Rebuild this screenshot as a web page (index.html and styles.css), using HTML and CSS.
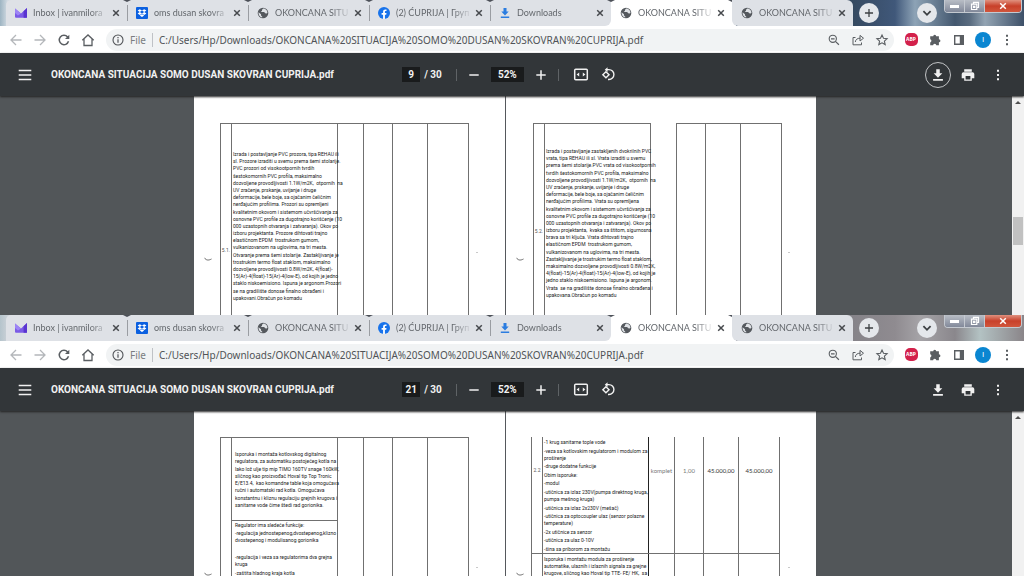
FILE: index.html
```html
<!DOCTYPE html>
<html lang="sr">
<head>
<meta charset="utf-8">
<title>OKONCANA SITUACIJA SOMO DUSAN SKOVRAN CUPRIJA.pdf</title>
<link rel="stylesheet" href="styles.css">
</head>
<body>
<svg class="defs" aria-hidden="true">
  <symbol id="mail" viewBox="0 0 12 12"><path d="M0 1.500 6 6.600 12 1v8.700a1 1 0 0 1-1 1H1a1 1 0 0 1-1-1z" fill="#7b5be6"/><path d="M0 1.500 6 6.600 3 8.600 0 6z" fill="#9d84f5"/><path d="M12 1v9.700H8.600V4.200z" fill="#5a35d0"/></symbol>
  <symbol id="dropbox" viewBox="0 0 12 12"><rect width="12" height="12" rx="1" fill="#0b60e0"/><path d="m3.800 2.200 2.200 1.400-2.200 1.500-2.200-1.500zm4.400 0 2.200 1.400-2.200 1.500L6 3.600zM3.800 5.100 6 6.500 3.800 8 1.600 6.500zm4.400 0 2.200 1.400L8.200 8 6 6.500zM6 7.200l2.200 1.400L6 10 3.800 8.600z" fill="#fff"/></symbol>
  <symbol id="globe" viewBox="0 0 12 12"><circle cx="6" cy="6" r="5.300" fill="#55595e"/><path d="M1.500 5.200 4 7.200v1.200l1.200 1v1.100C2.900 10.200 1.300 8 1.500 5.200zM6.300 1.600 5 2.700v1.100L3.800 5h3.400l.9 1.200 1.700.4.700-1.200C10.200 3.300 8.500 1.700 6.300 1.600z" fill="#dfe2e6"/></symbol>
  <symbol id="facebook" viewBox="0 0 12 12"><circle cx="6" cy="6" r="6" fill="#1873eb"/><path d="M5.100 12V7.700H3.600V6h1.500V4.700c0-1.500.9-2.300 2.200-2.300l1.200.1v1.500h-.7c-.7 0-.9.4-.9.900V6h1.600l-.3 1.700H6.900V12z" fill="#fff"/></symbol>
  <symbol id="dl" viewBox="0 0 12 12"><path d="M4.500 1h3v3.600h2.200L6 8.400 2.300 4.600h2.200zM1.800 9.500h8.400V11H1.800z"/></symbol>
  <symbol id="close" viewBox="0 0 10 10"><path d="m2.200 2.200 5.600 5.600m0-5.600L2.200 7.800" fill="none" stroke="currentColor" stroke-width="1.500"/></symbol>
  <symbol id="back" viewBox="0 0 14 14"><path d="M12.500 7H2.200M7 2 2 7l5 5" fill="none" stroke="currentColor" stroke-width="1.300"/></symbol>
  <symbol id="fwd" viewBox="0 0 14 14"><path d="M1.500 7h10.300M7 2l5 5-5 5" fill="none" stroke="currentColor" stroke-width="1.300"/></symbol>
  <symbol id="reload" viewBox="0 0 14 14"><path d="M11.500 8.300A4.700 4.700 0 1 1 10.600 4l1 1" fill="none" stroke="currentColor" stroke-width="1.500"/><path d="M12.300 1.700v4.200H8z" fill="currentColor"/></symbol>
  <symbol id="home" viewBox="0 0 14 14"><path d="M1.300 7.300 7 2l5.700 5.300M3 6v6.500h8V6" fill="none" stroke="currentColor" stroke-width="1.300"/></symbol>
  <symbol id="info" viewBox="0 0 14 14"><circle cx="7" cy="7" r="5" fill="none" stroke="currentColor" stroke-width="1.100"/><path d="M7 6.300v3.400M7 4v1.200" stroke="currentColor" stroke-width="1.200"/></symbol>
  <symbol id="zoomout" viewBox="0 0 14 14"><circle cx="5.800" cy="5.800" r="3.600" fill="none" stroke="currentColor" stroke-width="1.100"/><path d="m8.400 8.400 3.500 3.400M4 5.800h3.600" stroke="currentColor" stroke-width="1.200"/></symbol>
  <symbol id="share" viewBox="0 0 14 14"><path d="M4.500 4.500H2v7.300h8.500V9.500M4.300 9c.3-2.500 1.900-3.800 5-3.800" fill="none" stroke="currentColor"/><path d="M9 2.400 12.500 5.200 9 8z" fill="none" stroke="currentColor"/></symbol>
  <symbol id="star" viewBox="0 0 14 14"><path d="m7 2 1.500 3.300 3.600.4-2.700 2.400.8 3.500L7 9.800l-3.200 1.800.8-3.500-2.700-2.400 3.600-.4z" fill="none" stroke="currentColor" stroke-width="1.100"/></symbol>
  <symbol id="puzzle" viewBox="0 0 14 14"><path d="M5.200 3.200a1.500 1.500 0 0 1 3 0h2.700v3a1.500 1.500 0 0 1 0 3v3.100H8.300a1.600 1.600 0 0 0-3.200 0H2.200V9.400a1.600 1.600 0 0 0 0-3.100V3.200z" fill="currentColor"/></symbol>
  <symbol id="panel" viewBox="0 0 14 14"><path d="M2 2h10v10H2zm1.400 1.400v7.200h4.400V3.400z" fill="currentColor" fill-rule="evenodd"/></symbol>
  <symbol id="dots" viewBox="0 0 14 14"><path d="M6 1.800h2v2H6zm0 4.200h2v2H6zm0 4.200h2v2H6z" fill="currentColor"/></symbol>
  <symbol id="menu" viewBox="0 0 14 14"><path d="M.7 2.500h12.600M.7 7h12.600M.7 11.500h12.600" stroke="currentColor" stroke-width="1.600"/></symbol>
  <symbol id="minus" viewBox="0 0 14 14"><path d="M2.300 7h9.400" stroke="currentColor" stroke-width="1.500"/></symbol>
  <symbol id="plus" viewBox="0 0 14 14"><path d="M2.300 7h9.400M7 2.300v9.400" stroke="currentColor" stroke-width="1.500"/></symbol>
  <symbol id="fit" viewBox="0 0 16 14"><rect x="1.700" y="1.700" width="12.600" height="10.600" rx="1" fill="none" stroke="currentColor" stroke-width="1.500"/><path d="m6.200 4.900v4.200L3.600 7zm3.600 0v4.200L12.400 7z" fill="currentColor"/></symbol>
  <symbol id="rotate" viewBox="0 0 16 16"><path d="m5.800 5 3.300 3.200-3.300 3.300-3.300-3.300zM6.500 2.800H9a5.200 5.200 0 0 1 0 10.600H8" fill="none" stroke="currentColor" stroke-width="1.500"/><path d="M7.500.2v5.200L4.500 2.800z" fill="currentColor"/></symbol>
  <symbol id="print" viewBox="0 0 14 14"><path d="M3.200 1.300h7.600v2.400H3.200zM2.500 4.300h9A1.800 1.800 0 0 1 13.300 6v4.200h-2.500v2.500H3.200v-2.500H.7V6a1.800 1.800 0 0 1 1.800-1.700zM4.600 8v3.400h4.800V8z" fill="currentColor" fill-rule="evenodd"/></symbol>
  <symbol id="chev" viewBox="0 0 10 10"><path d="m2 3.500 3 3 3-3" fill="none" stroke="currentColor" stroke-width="1.500"/></symbol>
  <symbol id="restore" viewBox="0 0 10 10"><path d="M3.500 3V1.300h5v5.200H7M1.500 3.200h5.300v5.300H1.500zM3.600 5.300h1.200v1.200H3.600z" fill="none" stroke="currentColor" stroke-width="1.200"/></symbol>
  <symbol id="tick" viewBox="0 0 8 4"><path d="M.5 .8C2 3.400 4.500 3.600 7.500 2" fill="none" stroke="#666"/></symbol>
</svg>

<section class="window">
  <header class="strip strip-blue">
    <nav class="tabs">
      <a class="tab" href="#"><svg class="fav"><use href="#mail"/></svg><span class="tab-title">Inbox | ivanmilora</span><svg class="x"><use href="#close"/></svg></a>
      <a class="tab" href="#"><svg class="fav"><use href="#dropbox"/></svg><span class="tab-title">oms dusan skovra</span><svg class="x"><use href="#close"/></svg></a>
      <a class="tab" href="#"><svg class="fav"><use href="#globe"/></svg><span class="tab-title">OKONCANA SITU</span><svg class="x"><use href="#close"/></svg></a>
      <a class="tab" href="#"><svg class="fav"><use href="#facebook"/></svg><span class="tab-title">(2) ĆUPRIJA | Груп</span><svg class="x"><use href="#close"/></svg></a>
      <a class="tab tab-last" href="#"><svg class="fav fav-dl"><use href="#dl"/></svg><span class="tab-title">Downloads</span><svg class="x"><use href="#close"/></svg></a>
      <a class="tab active" href="#"><svg class="fav"><use href="#globe"/></svg><span class="tab-title">OKONCANA SITU</span><svg class="x"><use href="#close"/></svg></a>
      <a class="tab tab-end" href="#"><svg class="fav"><use href="#globe"/></svg><span class="tab-title">OKONCANA SITU</span><svg class="x"><use href="#close"/></svg></a>
    </nav>
    <button class="round" aria-label="New tab"><svg><use href="#plus"/></svg></button>
    <button class="round round-right" aria-label="Search tabs"><svg><use href="#chev"/></svg></button>
    <div class="controls"><button aria-label="Minimize"><i class="min"></i></button><button aria-label="Restore"><svg><use href="#restore"/></svg></button><button class="quit" aria-label="Close"><svg><use href="#close"/></svg></button></div>
  </header>
  <div class="address">
    <button class="ic dim" aria-label="Back"><svg><use href="#back"/></svg></button>
    <button class="ic dim" aria-label="Forward"><svg><use href="#fwd"/></svg></button>
    <button class="ic" aria-label="Reload"><svg><use href="#reload"/></svg></button>
    <button class="ic" aria-label="Home"><svg><use href="#home"/></svg></button>
    <div class="omnibox">
      <svg class="info"><use href="#info"/></svg><label class="file" for="url1">File</label>
      <input class="url" id="url1" value="C:/Users/Hp/Downloads/OKONCANA%20SITUACIJA%20SOMO%20DUSAN%20SKOVRAN%20CUPRIJA.pdf">
      <button class="ic" aria-label="Zoom"><svg><use href="#zoomout"/></svg></button>
      <button class="ic" aria-label="Share"><svg><use href="#share"/></svg></button>
      <button class="ic" aria-label="Bookmark"><svg><use href="#star"/></svg></button>
    </div>
    <button class="ic" aria-label="Adblock Plus"><span class="abp">ABP</span></button>
    <button class="ic" aria-label="Extensions"><svg><use href="#puzzle"/></svg></button>
    <button class="ic" aria-label="Side panel"><svg><use href="#panel"/></svg></button>
    <button class="ic" aria-label="Profile"><span class="avatar">I</span></button>
    <button class="ic" aria-label="Menu"><svg><use href="#dots"/></svg></button>
  </div>
  <div class="pdfbar">
    <div class="pdf-left"><button class="ic" aria-label="Sidebar"><svg><use href="#menu"/></svg></button><h1 class="pdf-title">OKONCANA SITUACIJA SOMO DUSAN SKOVRAN CUPRIJA.pdf</h1></div>
    <div class="pdf-mid">
      <input class="box box-page" aria-label="Page" value="9"><span class="total">/ 30</span><i class="sep"></i>
      <button class="ic" aria-label="Zoom out"><svg><use href="#minus"/></svg></button>
      <input class="box box-zoom" aria-label="Zoom level" value="52%">
      <button class="ic" aria-label="Zoom in"><svg><use href="#plus"/></svg></button><i class="sep"></i>
      <button class="ic wide" aria-label="Fit to page"><svg><use href="#fit"/></svg></button>
      <button class="ic wide" aria-label="Rotate"><svg><use href="#rotate"/></svg></button>
    </div>
    <div class="pdf-right">
      <button class="ic focus" aria-label="Download"><svg fill="currentColor"><use href="#dl"/></svg></button>
      <button class="ic" aria-label="Print"><svg><use href="#print"/></svg></button>
      <button class="ic" aria-label="More"><svg><use href="#dots"/></svg></button>
    </div>
  </div>
  <main class="viewer">
    <div class="pages">
      <article class="page">
        <svg class="mark"><use href="#tick"/></svg><i class="speck"></i>
        <table class="sheet">
          <colgroup><col class="c1"><col class="c2"><col class="c3"><col class="c4"><col class="c5"><col class="c6"></colgroup>
          <tr class="tall"><td class="num num-a">5.1.</td><td class="txt txt-a"><div class="lines">
            <span>Izrada i postavljanje PVC prozora, tipa REHAU ili</span><span>sl. Prozore izraditi u svemu prema šemi stolarije.</span><span>PVC prozori od visokootpornih tvrdih</span><span>šestokomornih PVC profila, maksimalno</span><span>dozvoljene provodljivosti 1.1W/m2K,&nbsp; otpornih&nbsp; na</span><span>UV zračenje, prskanje, uvijanje i druge</span><span>deformacije, bele boje, sa ojačanim čeličnim</span><span>nerđajućim profilima. Prozori su opremljeni</span><span>kvalitetnim okovom i sistemom učvršćivanja za</span><span>osnovne PVC profile za dugotrajno korišćenje (10</span><span>000 uzastopnih otvaranja i zatvaranja). Okov po</span><span>izboru projektanta. Prozore dihtovati trajno</span><span>elastičnom EPDM&nbsp; trostrukom gumom,</span><span>vulkanizovanom na uglovima, na tri mesta.</span><span>Otvaranje prema šemi stolarije. Zastakljivanje je</span><span>trostrukim termo float staklom, maksimalno</span><span>dozvoljene provodljivosti 0.8W/m2K, 4(float)-</span><span>15(Ar)-4(float)-15(Ar)-4(low-E), od kojih je jedno</span><span>staklo niskoemisiono. Ispuna je argonom.Prozori</span><span>se na gradilište donose finalno obrađeni i</span><span>upakovani.Obračun po komadu</span>
          </div></td><td></td><td></td><td></td><td></td></tr>
        </table>
      </article>
      <article class="page">
        <svg class="mark"><use href="#tick"/></svg><i class="speck"></i>
        <table class="sheet">
          <colgroup><col class="c1"><col class="c2"><col class="c3"><col class="c4"><col class="c5"><col class="c6"></colgroup>
          <tr class="tall"><td class="num num-b">5.2.</td><td class="txt txt-b"><div class="lines">
            <span>Izrada i postavljanje zastakljenih dvokrilnih PVC</span><span>vrata, tipa REHAU ili sl. Vrata izraditi u svemu</span><span>prema šemi stolarije.PVC vrata od visokootpornih</span><span>tvrdih šestokomornih PVC profila, maksimalno</span><span>dozvoljene provodljivosti 1.1W/m2K,&nbsp; otpornih&nbsp; na</span><span>UV zračenje, prskanje, uvijanje i druge</span><span>deformacije, bele boje, sa ojačanim čeličnim</span><span>nerđajućim profilima. Vrata su opremljena</span><span>kvalitetnim okovom i sistemom učvršćivanja za</span><span>osnovne PVC profile za dugotrajno korišćenje (10</span><span>000 uzastopnih otvaranja i zatvaranja). Okov po</span><span>izboru projektanta,&nbsp; kvaka sa štitom, sigurnosna</span><span>brava sa tri ključa. Vrata dihtovati trajno</span><span>elastičnom EPDM&nbsp; trostrukom gumom,</span><span>vulkanizovanom na uglovima, na tri mesta.</span><span>Zastakljivanje je trostrukim termo float staklom,</span><span>maksimalno dozvoljene provodljivosti 0.8W/m2K,</span><span>4(float)-15(Ar)-4(float)-15(Ar)-4(low-E), od kojih je</span><span>jedno staklo niskoemisiono. Ispuna je argonom.</span><span>Vrata&nbsp; se na gradilište donose finalno obrađena i</span><span>upakovana.Obračun po komadu</span>
          </div></td><td class="gap"></td><td></td><td></td><td></td></tr>
        </table>
      </article>
    </div>
    <div class="scroll"><i class="up"></i><i class="thumb"></i></div>
  </main>
</section>

<section class="window">
  <header class="strip strip-grey">
    <nav class="tabs">
      <a class="tab" href="#"><svg class="fav"><use href="#mail"/></svg><span class="tab-title">Inbox | ivanmilora</span><svg class="x"><use href="#close"/></svg></a>
      <a class="tab" href="#"><svg class="fav"><use href="#dropbox"/></svg><span class="tab-title">oms dusan skovra</span><svg class="x"><use href="#close"/></svg></a>
      <a class="tab" href="#"><svg class="fav"><use href="#globe"/></svg><span class="tab-title">OKONCANA SITU</span><svg class="x"><use href="#close"/></svg></a>
      <a class="tab" href="#"><svg class="fav"><use href="#facebook"/></svg><span class="tab-title">(2) ĆUPRIJA | Груп</span><svg class="x"><use href="#close"/></svg></a>
      <a class="tab tab-last" href="#"><svg class="fav fav-dl"><use href="#dl"/></svg><span class="tab-title">Downloads</span><svg class="x"><use href="#close"/></svg></a>
      <a class="tab active" href="#"><svg class="fav"><use href="#globe"/></svg><span class="tab-title">OKONCANA SITU</span><svg class="x"><use href="#close"/></svg></a>
      <a class="tab tab-end" href="#"><svg class="fav"><use href="#globe"/></svg><span class="tab-title">OKONCANA SITU</span><svg class="x"><use href="#close"/></svg></a>
    </nav>
    <button class="round" aria-label="New tab"><svg><use href="#plus"/></svg></button>
    <button class="round round-right" aria-label="Search tabs"><svg><use href="#chev"/></svg></button>
    <div class="controls"><button aria-label="Minimize"><i class="min"></i></button><button aria-label="Restore"><svg><use href="#restore"/></svg></button><button class="quit" aria-label="Close"><svg><use href="#close"/></svg></button></div>
  </header>
  <div class="address">
    <button class="ic dim" aria-label="Back"><svg><use href="#back"/></svg></button>
    <button class="ic dim" aria-label="Forward"><svg><use href="#fwd"/></svg></button>
    <button class="ic" aria-label="Reload"><svg><use href="#reload"/></svg></button>
    <button class="ic" aria-label="Home"><svg><use href="#home"/></svg></button>
    <div class="omnibox">
      <svg class="info"><use href="#info"/></svg><label class="file" for="url2">File</label>
      <input class="url" id="url2" value="C:/Users/Hp/Downloads/OKONCANA%20SITUACIJA%20SOMO%20DUSAN%20SKOVRAN%20CUPRIJA.pdf">
      <button class="ic" aria-label="Zoom"><svg><use href="#zoomout"/></svg></button>
      <button class="ic" aria-label="Share"><svg><use href="#share"/></svg></button>
      <button class="ic" aria-label="Bookmark"><svg><use href="#star"/></svg></button>
    </div>
    <button class="ic" aria-label="Adblock Plus"><span class="abp">ABP</span></button>
    <button class="ic" aria-label="Extensions"><svg><use href="#puzzle"/></svg></button>
    <button class="ic" aria-label="Side panel"><svg><use href="#panel"/></svg></button>
    <button class="ic" aria-label="Profile"><span class="avatar">I</span></button>
    <button class="ic" aria-label="Menu"><svg><use href="#dots"/></svg></button>
  </div>
  <div class="pdfbar">
    <div class="pdf-left"><button class="ic" aria-label="Sidebar"><svg><use href="#menu"/></svg></button><h1 class="pdf-title">OKONCANA SITUACIJA SOMO DUSAN SKOVRAN CUPRIJA.pdf</h1></div>
    <div class="pdf-mid">
      <input class="box box-page" aria-label="Page" value="21"><span class="total">/ 30</span><i class="sep"></i>
      <button class="ic" aria-label="Zoom out"><svg><use href="#minus"/></svg></button>
      <input class="box box-zoom" aria-label="Zoom level" value="52%">
      <button class="ic" aria-label="Zoom in"><svg><use href="#plus"/></svg></button><i class="sep"></i>
      <button class="ic wide" aria-label="Fit to page"><svg><use href="#fit"/></svg></button>
      <button class="ic wide" aria-label="Rotate"><svg><use href="#rotate"/></svg></button>
    </div>
    <div class="pdf-right">
      <button class="ic" aria-label="Download"><svg fill="currentColor"><use href="#dl"/></svg></button>
      <button class="ic" aria-label="Print"><svg><use href="#print"/></svg></button>
      <button class="ic" aria-label="More"><svg><use href="#dots"/></svg></button>
    </div>
  </div>
  <main class="viewer">
    <div class="pages">
      <article class="page page-c">
        <svg class="mark"><use href="#tick"/></svg><i class="speck"></i>
        <table class="sheet">
          <colgroup><col class="c1"><col class="c2"><col class="c3"><col class="c4"><col class="c5"><col class="c6"></colgroup>
          <tr class="first-c"><td rowspan="2"></td><td class="txt txt-c"><div class="lines short">
            <span>Isporuka i montaža kotlovskog digitalnog</span><span>regulatora, za automatiku postojećeg kotla na</span><span>lako lož ulje tip mip TIMO 160TV snage 160kW,</span><span>sličnog kao proizvođač Hoval tip Top Tronic</span><span>E/E13.4,&nbsp; kao komandne table koja omogućava</span><span>ručni i automatski rad kotla. Omogućava</span><span>konstantnu i kliznu regulaciju grejnih krugova i</span><span>sanitarne vode čime štedi rad gorionika.</span>
          </div></td><td rowspan="2"></td><td rowspan="2"></td><td rowspan="2"></td><td rowspan="2"></td></tr>
          <tr class="tall"><td class="txt txt-d">
            <p><span>Regulator ima sledeće funkcije:</span></p><p><span>-regulacija jednostepenog,dvostepenog,klizno</span><span>dvostepenog i modulisanog gorionika</span></p><p class="apart"><span>-regulacija i veza sa regulatorima dva grejna</span><span>kruga</span></p><p><span>-zaštita hladnog kraja kotla</span></p>
          </td></tr>
        </table>
      </article>
      <article class="page page-d">
        <svg class="mark"><use href="#tick"/></svg><i class="speck"></i>
        <table class="sheet">
          <colgroup><col class="c1"><col class="c2"><col class="c3"><col class="c4"><col class="c5"><col class="c6"></colgroup>
          <tr class="first-d"><td class="num num-d">2.2</td><td class="txt txt-e"><div class="lines list">
            <p><span>-1 krug sanitarne tople vode</span></p><p><span>-veza sa kotlovskim regulatorom i modulom za</span><span>proširenje</span></p><p><span>-druge dodatne funkcije</span></p><p><span>Obim isporuke:</span></p><p><span>-modul</span></p><p><span>-utičnica za izlaz 230V(pumpa direktnog kruga,</span><span>pumpa mešnog kruga)</span></p><p><span>-utičnica za izlaz 2x230V (mešač)</span></p><p><span>-utičnica za optocoupler ulaz (senzor polazne</span><span>temperature)</span></p><p><span>-2x utičnice za senzor</span></p><p><span>-utičnica za ulaz 0-10V</span></p><p><span>-šina sa priborom za montažu</span></p>
          </div></td><td class="val">komplet</td><td class="val">1,00</td><td class="val dark">45.000,00</td><td class="val dark">45.000,00</td></tr>
          <tr class="tall"><td></td><td class="txt txt-f"><p><span>Isporuka i montažu modula za proširenje</span><span>automatike, ulaznih i izlaznih signala za grejne</span><span>krugove, sličnog kao Hoval tip TTE- FE/ HK,&nbsp; sa</span></p></td><td></td><td></td><td></td><td></td></tr>
        </table>
      </article>
    </div>
    <div class="scroll"><i class="up"></i></div>
  </main>
</section>
</body>
</html>
```
FILE: styles.css
```css
* { box-sizing: border-box; }
body {
  margin: 0;
  height: 100vh;
  display: grid;
  grid-template-rows: 315fr 261fr;
  overflow: hidden;
  font-family: "Noto Sans", "Open Sans", sans-serif;
  color: #505357;
}
button, input { font: inherit; color: inherit; border: 0; padding: 0; margin: 0; background: none; }
.defs { display: none; }
.window { display: flex; flex-direction: column; min-height: 0; overflow: hidden; }

.strip { flex: none; height: 26px; display: flex; align-items: center; padding-left: 6px; position: relative; }
.strip-blue { background: linear-gradient(90deg, #9db4c2 0, #d5dde4 8px, #2e3f55 40px, #35495f 850px, #40587a 895px, #8da3b6 915px, #44586f 955px, #5a6c80 970px, #93a4b3 985px, #3d5068 100%); }
.strip-grey { background: linear-gradient(90deg, #b5c4cc 0, #ccd2d8 8px, #77777b 40px, #858389 850px, #8f8b90 895px, #a5a3a7 920px, #8a878c 955px, #b3c2c3 980px, #8a8589 100%); }
.tabs { display: flex; align-self: stretch; }
.tab { width: 121px; display: flex; align-items: center; padding: 0 6px 0 9px; background: #dee1e6; color: #63676c; text-decoration: none; position: relative; }
.tab:first-child { border-radius: 5px 0 0 0; }
.tab::after { content: ""; position: absolute; right: -1px; top: 5px; width: 1px; height: 16px; background: #9a9da2; z-index: 1; }
.tab::before { content: ""; position: absolute; right: -4px; top: 0; border: 4px solid transparent; border-top: 2px solid #4c5058; border-bottom: 0; z-index: 1; }
.tab-last::after, .active::after, .tab-end::after, .tab-end::before { display: none; }
.tab-last { border-radius: 0 0 6px 0; box-shadow: 6px 0 0 #fff; }
.active { background: #fff; border-radius: 6px 6px 0 0; box-shadow: 4px 0 0 #fff; z-index: 0; }
.tab-end { border-radius: 0 6px 0 6px; z-index: 1; }
.fav { flex: none; width: 12px; height: 12px; }
.fav-dl { fill: #2b7de0; }
.tab-title { flex: 1; margin: 0 2px 0 6px; font-family: Lato, "Open Sans", sans-serif; font-size: 9px; line-height: 14px; white-space: nowrap; -webkit-mask-image: linear-gradient(90deg, #000 75%, transparent); mask-image: linear-gradient(90deg, #000 75%, transparent); }
.x { flex: none; width: 10px; height: 10px; color: #46494d; }
.round { width: 20px; height: 20px; border-radius: 50%; background: #e4e7eb; display: grid; place-items: center; margin-left: 6px; color: #3c4043; flex: none; }
.round svg { width: 12px; height: 12px; }
.round-right { margin-left: auto; margin-right: 87px; }
.controls { position: absolute; right: 2px; top: 0; display: flex; height: 13px; border: 1px solid #c4c9d0; border-top: 0; border-radius: 0 0 4px 4px; overflow: hidden; }
.controls button { width: 20px; display: grid; place-items: center; border-right: 1px solid #c4c9d0; background: linear-gradient(#b9bec6, #82899a); color: #fff; }
.controls .quit { width: 36px; border: 0; background: linear-gradient(#e0917f, #c8402a 50%, #d1563c); }
.controls svg { width: 10px; height: 10px; }
.min { width: 9px; height: 3px; background: #fff; }

.address { flex: none; height: 27px; display: flex; align-items: center; padding: 0 5px 0 4px; background: #fff; }
.ic { width: 24px; height: 24px; flex: none; display: grid; place-items: center; color: #5a5e62; }
.ic svg { width: 14px; height: 14px; }
.dim { color: #b4b7ba; }
.omnibox { flex: 1; display: flex; align-items: center; height: 22px; margin: 0 5px 0 6px; padding-left: 5px; border-radius: 11px; background: #f1f3f4; font-size: 10px; line-height: 14px; }
.info { width: 14px; height: 14px; flex: none; }
.file { margin: 0 6px 0 5px; padding-right: 6px; border-right: 1px solid #bfc2c6; color: #7a7d81; }
.url { flex: 1; min-width: 0; height: 18px; }
.abp { width: 13px; height: 13px; border-radius: 5px; background: #d3214b; color: #fff; font: bold 5px/13px "Open Sans", sans-serif; text-align: center; }
.avatar { width: 16px; height: 16px; border-radius: 50%; background: #0a86d1; color: #fff; font: 8px/16px Roboto, sans-serif; text-align: center; }

.pdfbar { flex: none; height: 43px; display: grid; grid-template-columns: 1fr auto 1fr; align-items: center; padding: 0 12px; background: #323639; color: #f1f1f1; font-family: Roboto, sans-serif; font-size: 10px; font-weight: 700; box-shadow: 0 1px 2px #222; z-index: 1; }
.pdfbar .ic { color: #f1f1f1; }
.pdf-left, .pdf-mid, .pdf-right { display: flex; align-items: center; min-width: 0; }
.pdf-left { padding-left: 1px; }
.pdf-title { margin: 0 0 0 14px; font-size: inherit; line-height: 16px; white-space: nowrap; }
.box { height: 15px; background: #191b1c; text-align: center; }
.box-page { width: 18px; }
.box-zoom { width: 33px; margin: 0 5px; }
.total { margin: 0 14px 0 4px; }
.sep { width: 1px; height: 12px; background: #5f6366; }
.sep + .ic { margin-left: 5px; }
.pdf-mid .ic + .sep { margin-left: 5px; }
.pdf-mid .wide { width: 27px; }
.pdf-mid .sep + .wide { margin-left: 9px; }
.wide svg { width: 16px; height: 15px; }
.pdf-right { justify-content: flex-end; gap: 6px; padding-right: 2px; }
.focus { border: 1px solid #c2c4c6; border-radius: 50%; width: 26px; height: 26px; margin-right: -1px; }

.viewer { flex: 1; min-height: 0; display: flex; background: #525659; overflow: hidden; }
.pages { flex: 1; display: flex; justify-content: center; padding-right: 2px; }
.page { position: relative; width: 311px; padding: 27px 0 0 26px; background: #fff; }
.page + .page { border-left: 1px solid #55585c; padding-left: 27px; }
.page-c, .page-d { padding-top: 26px; }
.page-d.page-d { padding-left: 25px; }
.mark { position: absolute; left: 10px; top: 161px; width: 8px; height: 4px; }
.speck { position: absolute; left: 282px; top: 156px; width: 2px; height: 1px; background: #c9c9c9; }
.sheet { width: 248px; table-layout: fixed; border-collapse: collapse; font-family: Roboto, "Liberation Sans", sans-serif; font-size: 5px; line-height: 7px; color: #222; }
.c1 { width: 11px; } .c2 { width: 106px; } .c3 { width: 26px; } .c4 { width: 29px; } .c5 { width: 35px; } .c6 { width: 41px; }
.sheet td { padding: 0; border: 1px solid #707070; vertical-align: top; }
.sheet .gap { border-top: 0; border-bottom: 0; }
.tall { height: 240px; }
.sheet .num { text-align: center; color: #555; }
.sheet .num-a { padding-top: 123px; }
.sheet .num-b { padding-top: 104px; }
.sheet .num-d { padding-top: 30px; }
.sheet .txt { white-space: nowrap; }
.txt span { display: block; }
.sheet .txt-a { padding: 27px 0 0 1px; }
.sheet .txt-b { padding: 24px 0 0 1px; }
.sheet .txt-c { padding: 13px 0 0 3px; }
.sheet .txt-d { padding: 1px 0 0 3px; }
.sheet .txt-e { padding: 2px 0 0 1px; border-right-color: #222; }
.sheet .txt-f { padding: 2px 0 0 1px; border-right-color: #222; }
.lines { display: flex; flex-direction: column; justify-content: space-between; height: 151px; }
.short { height: 58px; }
.list { height: 114px; }
.txt p { margin: 0; }
.txt-d p { margin-bottom: 1px; }
.txt-d .apart { margin-top: 10px; margin-bottom: 2px; }
.first-c { height: 83px; }
.first-d { height: 116px; }
.page-d .first-d td { border-top: 0; }
.sheet .val { padding-top: 30px; text-align: center; font-family: Lato, sans-serif; font-size: 6px; color: #777; }
.sheet .dark { color: #333; }

.scroll { width: 12px; flex: none; display: flex; flex-direction: column; align-items: center; background: #f1f1f1; }
.up { margin-top: 5px; border: 3px solid transparent; border-bottom-color: #505050; border-top: 0; }
.thumb { width: 10px; height: 28px; margin-top: 113px; background: #c1c1c1; }
```
